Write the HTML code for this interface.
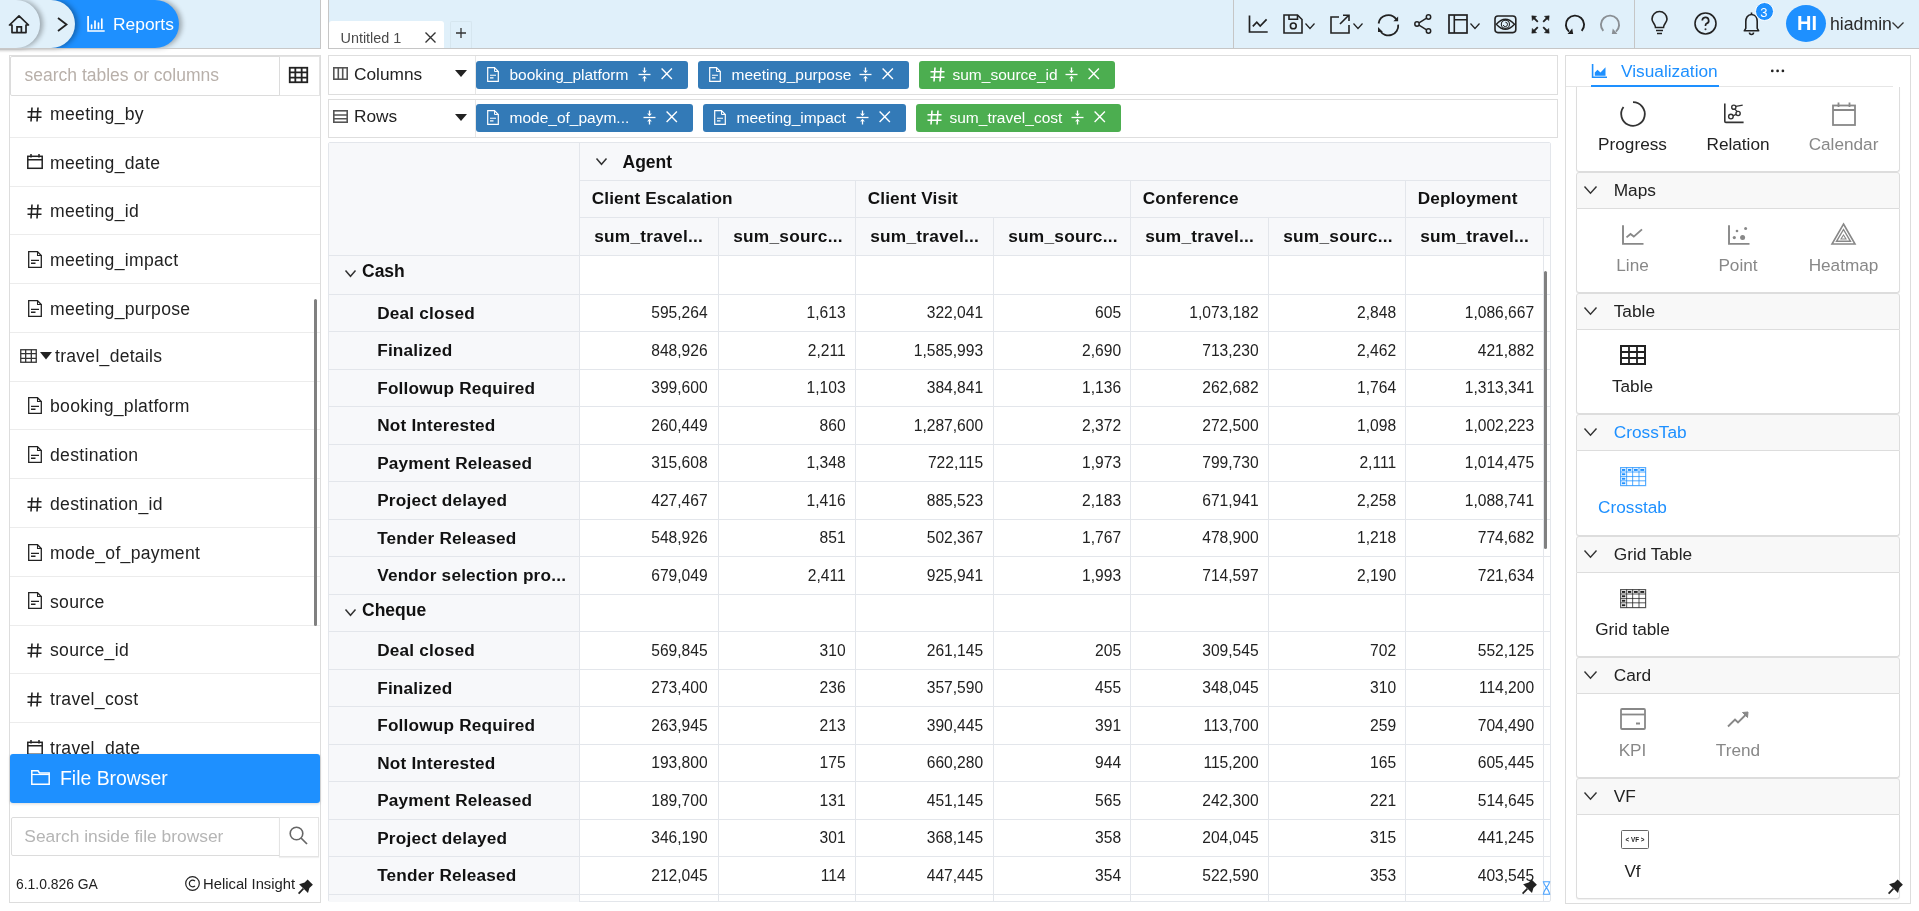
<!DOCTYPE html><html><head><meta charset="utf-8"><title>Reports</title><style>
*{box-sizing:border-box;margin:0;padding:0}
html,body{width:1919px;height:911px;overflow:hidden;background:#fff;font-family:"Liberation Sans",sans-serif;color:#222}
.a{position:absolute}
.t{position:absolute;white-space:nowrap}
svg.a{overflow:visible}
</style></head><body><div class="a" style="left:0;top:0;width:1919px;height:911px;overflow:hidden;will-change:transform"><div class="a" style="left:0px;top:0px;width:321px;height:49px;background:#e0f0fa;border-right:1px solid #c6c6c6"></div><div class="a" style="left:328px;top:0px;width:1591px;height:49px;background:#e0f0fa;border-left:1px solid #c6c6c6;border-bottom:1px solid #c6c6c6"></div><div class="a" style="left:-30px;top:0px;width:209px;height:48px;background:#1e90ff;border-radius:0 24px 24px 0;box-shadow:3px 0 5px rgba(0,0,0,.3)"></div><div class="a" style="left:-30px;top:0px;width:105px;height:48px;background:#e0f0fa;border-radius:0 24px 24px 0;box-shadow:3px 0 5px rgba(0,0,0,.3)"></div><div class="a" style="left:-30px;top:0px;width:70px;height:48px;background:#e0f0fa;border-radius:0 24px 24px 0;box-shadow:3px 0 5px rgba(0,0,0,.3)"></div><svg class="a" style="left:9px;top:15px;color:#222" width="21" height="19" viewBox="0 0 21 19" fill="none" stroke="currentColor"><path d="M0.5 10 L10 0.8 L19.5 10 H17 V17.6 H3 V10 Z" stroke-width="1.7" stroke-linejoin="round"/><path d="M8 17.6 V11.8 H12.4 V17.6" stroke-width="1.7"/></svg><svg class="a" style="left:57px;top:17px;color:#222" width="11" height="15" viewBox="0 0 11 15" fill="none" stroke="currentColor"><path d="M1 1 L9.5 7.5 L1 14" stroke-width="1.8"/></svg><svg class="a" style="left:87px;top:16px;color:#fff" width="18" height="16" viewBox="0 0 18 16" fill="none" stroke="currentColor"><path d="M1.1 0 V15 H17.7" stroke-width="1.7"/><path d="M4.6 9 V12.3 M8 5 V12.3 M11.5 7 V12.3 M14.8 3.1 V12.3" stroke-width="1.7" stroke-linecap="round"/></svg><div class="t" style="left:113px;top:15.97px;font-size:17.4px;line-height:17.4px;color:#fff;">Reports</div><div class="a" style="left:0px;top:48px;width:320px;height:1px;background:#c8c8c8"></div><div class="a" style="left:329px;top:21px;width:115px;height:27px;background:#fff;border-radius:3px 3px 0 0"></div><div class="t" style="left:340.5px;top:31.21px;font-size:14.4px;line-height:14.4px;color:#4a4a4a;">Untitled 1</div><svg class="a" style="left:425px;top:32px;color:#333" width="11" height="11" viewBox="0 0 11 11" fill="none" stroke="currentColor"><path d="M0.5 0.5 L10.5 10.5 M10.5 0.5 L0.5 10.5" stroke-width="1.4"/></svg><div class="a" style="left:450px;top:21px;width:22px;height:27px;border:1px solid #d6e6ef;border-bottom:none;border-radius:2px 2px 0 0"></div><svg class="a" style="left:456px;top:28px;color:#333" width="10" height="10" viewBox="0 0 10 10" fill="none" stroke="currentColor"><path d="M5 0 V10 M0 5 H10" stroke-width="1.3"/></svg><div class="a" style="left:1233px;top:0px;width:1px;height:48px;background:#c6c6c6"></div><div class="a" style="left:1634px;top:0px;width:1px;height:48px;background:#c6c6c6"></div><svg class="a" style="left:1248px;top:15px;color:#222" width="20" height="18" viewBox="0 0 20 18" fill="none" stroke="currentColor"><path d="M1.5 0.5 V17 H19.7" stroke-width="1.7"/><path d="M4.8 11.4 L8.8 7.2 L12.2 11 L18.6 4.3" stroke-width="1.7"/></svg><svg class="a" style="left:1283px;top:14px;color:#222" width="20" height="20" viewBox="0 0 20 20" fill="none" stroke="currentColor"><path d="M1 1 H14.5 L19 5.5 V19 H1 Z" stroke-width="1.6"/><path d="M6 1 V5.2 H14.5 V1" stroke-width="1.6"/><circle cx="10.3" cy="11.9" r="2.9" stroke-width="1.6"/></svg><svg class="a" style="left:1305px;top:23px;color:#222" width="10" height="6" viewBox="0 0 10 6" fill="none" stroke="currentColor"><path d="M0.5 0.5 L5 5.5 L9.5 0.5" stroke-width="1.2"/></svg><svg class="a" style="left:1330px;top:14px;color:#222" width="20" height="20" viewBox="0 0 20 20" fill="none" stroke="currentColor"><path d="M9 3 H1 V19 H19 V11" stroke-width="1.6"/><path d="M10 10 L18.5 1.5 M13 1.2 H19 V7" stroke-width="1.6"/></svg><svg class="a" style="left:1353px;top:23px;color:#222" width="10" height="6" viewBox="0 0 10 6" fill="none" stroke="currentColor"><path d="M0.5 0.5 L5 5.5 L9.5 0.5" stroke-width="1.2"/></svg><svg class="a" style="left:1377px;top:13px;color:#222" width="23" height="23" viewBox="0 0 23 23" fill="none" stroke="currentColor"><path d="M1.6 10.5 A9.8 9.8 0 0 1 19.3 6.3" stroke-width="1.8"/><path d="M21.2 11.6 A9.8 9.8 0 0 1 3 17.6" stroke-width="1.8"/><path d="M21.1 3.6 V8.3 H16.4 Z" fill="currentColor" stroke="none"/><path d="M1 14 V18.9 H5.9 Z" fill="currentColor" stroke="none"/></svg><svg class="a" style="left:1414px;top:14px;color:#222" width="18" height="20" viewBox="0 0 18 20" fill="none" stroke="currentColor"><circle cx="14.5" cy="3" r="2.2" stroke-width="1.5"/><circle cx="3" cy="10" r="2.2" stroke-width="1.5"/><circle cx="14.5" cy="17" r="2.2" stroke-width="1.5"/><path d="M5 8.8 L12.6 4.2 M5 11.2 L12.6 15.8" stroke-width="1.5"/></svg><svg class="a" style="left:1448px;top:14px;color:#222" width="20" height="20" viewBox="0 0 20 20" fill="none" stroke="currentColor"><rect x="1" y="1" width="18" height="18" stroke-width="1.7"/><path d="M6.3 1 V19 M6.3 5.8 H19" stroke-width="1.6"/></svg><svg class="a" style="left:1470px;top:23px;color:#222" width="10" height="6" viewBox="0 0 10 6" fill="none" stroke="currentColor"><path d="M0.5 0.5 L5 5.5 L9.5 0.5" stroke-width="1.2"/></svg><svg class="a" style="left:1494px;top:15px;color:#222" width="23" height="19" viewBox="0 0 23 19" fill="none" stroke="currentColor"><rect x="1" y="1" width="20.8" height="16.6" rx="3" stroke-width="1.6"/><path d="M2.3 9.3 Q11.4 -0.8 20.5 9.3 Q11.4 19.4 2.3 9.3 Z" stroke-width="1.4"/><circle cx="11.4" cy="9.3" r="4.1" stroke-width="1.1"/><path d="M9.2 10 A2.2 2.2 0 1 0 11.4 7.2" stroke-width="1"/></svg><svg class="a" style="left:1531px;top:15px;color:#222" width="19" height="19" viewBox="0 0 19 19" fill="none" stroke="currentColor"><path d="M2.5 2.5 L6.8 6.8 M16.5 2.5 L12.2 6.8 M2.5 16.5 L6.8 12.2 M16.5 16.5 L12.2 12.2" stroke-width="1.8"/><path d="M0.8 0.8 L5.6 1.3 L1.3 5.6 Z M18.2 0.8 L13.4 1.3 L17.7 5.6 Z M0.8 18.2 L5.6 17.7 L1.3 13.4 Z M18.2 18.2 L13.4 17.7 L17.7 13.4 Z" fill="currentColor" stroke="currentColor" stroke-width="0.5" stroke-linejoin="round"/></svg><svg class="a" style="left:1564px;top:13px;color:#1e1e1e" width="22" height="23" viewBox="0 0 22 23" fill="none" stroke="currentColor"><path d="M17.7 17.9 A9.1 9.1 0 1 0 5 18.6" stroke-width="1.9"/><path d="M3.6 21 L9.2 21 L8.2 15.6 Z" fill="currentColor" stroke="none"/></svg><svg class="a" style="left:1599px;top:13px;color:#8a8f94" width="22" height="23" viewBox="0 0 22 23" fill="none" stroke="currentColor"><path d="M4.3 17.9 A9.1 9.1 0 1 1 17 18.6" stroke-width="1.9"/><path d="M18.4 21 L12.8 21 L13.8 15.6 Z" fill="currentColor" stroke="none"/></svg><svg class="a" style="left:1651px;top:12px;color:#222" width="17" height="23" viewBox="0 0 17 23" fill="none" stroke="currentColor"><path d="M4.5 15.5 C4.5 12 1 10.5 1 7 A7.5 7.5 0 0 1 16 7 C16 10.5 12.5 12 12.5 15.5 Z" stroke-width="1.6"/><path d="M5 18.5 H12 M6 21.5 H11" stroke-width="1.6"/></svg><svg class="a" style="left:1694px;top:12px;color:#222" width="23" height="23" viewBox="0 0 23 23" fill="none" stroke="currentColor"><circle cx="11.5" cy="11.5" r="10.5" stroke-width="1.6"/><path d="M8.3 8.6 A3.2 3.2 0 1 1 12.5 11.6 C11.8 11.9 11.5 12.5 11.5 13.4 V14" stroke-width="1.7"/><circle cx="11.5" cy="17.3" r="1" fill="#333" stroke="none"/></svg><svg class="a" style="left:1742px;top:12px;color:#222" width="19" height="23" viewBox="0 0 19 23" fill="none" stroke="currentColor"><path d="M9.5 2.5 C5.5 2.5 3.8 6 3.8 9.5 V16.3 L2.3 18.8 H16.7 L15.2 16.3 V9.5 C15.2 6 13.5 2.5 9.5 2.5 Z" stroke-width="1.6" stroke-linejoin="round"/><path d="M7.5 20.5 A2 2 0 0 0 11.5 20.5" stroke-width="1.6"/><path d="M9.5 0.5 V2.5" stroke-width="1.6"/></svg><div class="a" style="left:1754.5px;top:2px;width:19px;height:19px;background:#1e90ff;border:1.5px solid #fff;border-radius:50%"></div><div class="t" style="left:1760.3px;top:6.00px;font-size:13px;line-height:13px;color:#fff;">3</div><div class="a" style="left:1786px;top:5px;width:40px;height:37px;background:#1e90ff;border-radius:50%"></div><div class="t" style="left:1797px;top:13.17px;font-size:20px;line-height:20px;font-weight:700;color:#fff;">HI</div><div class="t" style="left:1830px;top:15.72px;font-size:17.7px;line-height:17.7px;color:#2a2a2a;">hiadmin</div><svg class="a" style="left:1892px;top:22px;color:#333" width="12" height="7" viewBox="0 0 12 7" fill="none" stroke="currentColor"><path d="M0.5 0.5 L6 6 L11.5 0.5" stroke-width="1.3"/></svg><div class="a" style="left:9px;top:55px;width:312px;height:848px;border:1px solid #ddd"></div><div class="a" style="left:10px;top:56px;width:270px;height:40px;border:1px solid #dcdcdc;border-radius:2px 0 0 2px"></div><div class="a" style="left:279px;top:56px;width:41px;height:40px;border:1px solid #e4e4e4;border-left:1px solid #dcdcdc"></div><div class="t" style="left:24.5px;top:67.19px;font-size:17.5px;line-height:17.5px;color:#b8b0aa;">search tables or columns</div><svg class="a" style="left:289px;top:67px;color:#222" width="19" height="16" viewBox="0 0 19 16" fill="none" stroke="currentColor"><rect x="0.75" y="0.75" width="17.5" height="14.5" stroke-width="1.8"/><path d="M0.75 5.33 H18.25 M0.75 10.67 H18.25 M6.33 0.75 V15.25 M12.67 0.75 V15.25" stroke-width="1.8"/></svg><div class="a" style="left:10px;top:96px;width:310px;height:658px;overflow:hidden"><div class="a" style="left:0px;top:41px;width:310px;height:1px;background:#ececec"></div><svg class="a" style="left:17px;top:10.5px;color:#222" width="15" height="15" viewBox="0 0 15 15" fill="none" stroke="currentColor"><path d="M5 0.5 L4 14.5 M11 0.5 L10 14.5 M0.5 4.8 H14.5 M0.5 10.2 H14.5" stroke-width="1.6"/></svg><div class="t" style="left:40px;top:9.80px;font-size:17.6px;line-height:17.6px;color:#222;letter-spacing:0.3px">meeting_by</div><div class="a" style="left:0px;top:90px;width:310px;height:1px;background:#ececec"></div><svg class="a" style="left:17px;top:58.28px;color:#222" width="16" height="15" viewBox="0 0 16 15" fill="none" stroke="currentColor"><rect x="0.8" y="2.3" width="14.4" height="12" stroke-width="1.5"/><path d="M0.8 5.8 H15.2 M4 0 V3.5 M12 0 V3.5" stroke-width="1.5"/></svg><div class="t" style="left:40px;top:58.58px;font-size:17.6px;line-height:17.6px;color:#222;letter-spacing:0.3px">meeting_date</div><div class="a" style="left:0px;top:138px;width:310px;height:1px;background:#ececec"></div><svg class="a" style="left:17px;top:108.06px;color:#222" width="15" height="15" viewBox="0 0 15 15" fill="none" stroke="currentColor"><path d="M5 0.5 L4 14.5 M11 0.5 L10 14.5 M0.5 4.8 H14.5 M0.5 10.2 H14.5" stroke-width="1.6"/></svg><div class="t" style="left:40px;top:107.36px;font-size:17.6px;line-height:17.6px;color:#222;letter-spacing:0.3px">meeting_id</div><div class="a" style="left:0px;top:187px;width:310px;height:1px;background:#ececec"></div><svg class="a" style="left:17.5px;top:154.84000000000003px;color:#222" width="14" height="17" viewBox="0 0 14 17" fill="none" stroke="currentColor"><path d="M0.7 0.7 H9.5 L13.3 4.5 V16.3 H0.7 Z" stroke-width="1.3"/><path d="M9.5 0.7 V4.5 H13.3" stroke-width="1.04"/><path d="M3 9.35 H11 M3 12.24 H7.5" stroke-width="1.3"/></svg><div class="t" style="left:40px;top:156.14px;font-size:17.6px;line-height:17.6px;color:#222;letter-spacing:0.3px">meeting_impact</div><div class="a" style="left:0px;top:236px;width:310px;height:1px;background:#ececec"></div><svg class="a" style="left:17.5px;top:203.62px;color:#222" width="14" height="17" viewBox="0 0 14 17" fill="none" stroke="currentColor"><path d="M0.7 0.7 H9.5 L13.3 4.5 V16.3 H0.7 Z" stroke-width="1.3"/><path d="M9.5 0.7 V4.5 H13.3" stroke-width="1.04"/><path d="M3 9.35 H11 M3 12.24 H7.5" stroke-width="1.3"/></svg><div class="t" style="left:40px;top:204.92px;font-size:17.6px;line-height:17.6px;color:#222;letter-spacing:0.3px">meeting_purpose</div><div class="a" style="left:0px;top:285px;width:310px;height:1px;background:#ececec"></div><svg class="a" style="left:10px;top:252.89999999999998px;color:#333" width="17" height="14" viewBox="0 0 17 14" fill="none" stroke="currentColor"><rect x="0.75" y="0.75" width="15.5" height="12.5" stroke-width="1.3"/><path d="M0.75 4.67 H16.25 M0.75 9.33 H16.25 M5.67 0.75 V13.25 M11.33 0.75 V13.25" stroke-width="1.3"/></svg><svg class="a" style="left:29.5px;top:255.89999999999998px;" width="12" height="7.5" viewBox="0 0 12 7.5" fill="none" stroke="currentColor"><path d="M0 0 H12 L6 7.5 Z" fill="#222" stroke="none"/></svg><div class="t" style="left:45px;top:251.99px;font-size:17.5px;line-height:17.5px;color:#222;letter-spacing:0.3px">travel_details</div><div class="a" style="left:0px;top:333px;width:310px;height:1px;background:#ececec"></div><svg class="a" style="left:17.5px;top:301.18px;color:#222" width="14" height="17" viewBox="0 0 14 17" fill="none" stroke="currentColor"><path d="M0.7 0.7 H9.5 L13.3 4.5 V16.3 H0.7 Z" stroke-width="1.3"/><path d="M9.5 0.7 V4.5 H13.3" stroke-width="1.04"/><path d="M3 9.35 H11 M3 12.24 H7.5" stroke-width="1.3"/></svg><div class="t" style="left:40px;top:302.48px;font-size:17.6px;line-height:17.6px;color:#222;letter-spacing:0.3px">booking_platform</div><div class="a" style="left:0px;top:382px;width:310px;height:1px;background:#ececec"></div><svg class="a" style="left:17.5px;top:349.96000000000004px;color:#222" width="14" height="17" viewBox="0 0 14 17" fill="none" stroke="currentColor"><path d="M0.7 0.7 H9.5 L13.3 4.5 V16.3 H0.7 Z" stroke-width="1.3"/><path d="M9.5 0.7 V4.5 H13.3" stroke-width="1.04"/><path d="M3 9.35 H11 M3 12.24 H7.5" stroke-width="1.3"/></svg><div class="t" style="left:40px;top:351.26px;font-size:17.6px;line-height:17.6px;color:#222;letter-spacing:0.3px">destination</div><div class="a" style="left:0px;top:431px;width:310px;height:1px;background:#ececec"></div><svg class="a" style="left:17px;top:400.74px;color:#222" width="15" height="15" viewBox="0 0 15 15" fill="none" stroke="currentColor"><path d="M5 0.5 L4 14.5 M11 0.5 L10 14.5 M0.5 4.8 H14.5 M0.5 10.2 H14.5" stroke-width="1.6"/></svg><div class="t" style="left:40px;top:400.04px;font-size:17.6px;line-height:17.6px;color:#222;letter-spacing:0.3px">destination_id</div><div class="a" style="left:0px;top:480px;width:310px;height:1px;background:#ececec"></div><svg class="a" style="left:17.5px;top:447.52px;color:#222" width="14" height="17" viewBox="0 0 14 17" fill="none" stroke="currentColor"><path d="M0.7 0.7 H9.5 L13.3 4.5 V16.3 H0.7 Z" stroke-width="1.3"/><path d="M9.5 0.7 V4.5 H13.3" stroke-width="1.04"/><path d="M3 9.35 H11 M3 12.24 H7.5" stroke-width="1.3"/></svg><div class="t" style="left:40px;top:448.82px;font-size:17.6px;line-height:17.6px;color:#222;letter-spacing:0.3px">mode_of_payment</div><div class="a" style="left:0px;top:529px;width:310px;height:1px;background:#ececec"></div><svg class="a" style="left:17.5px;top:496.29999999999995px;color:#222" width="14" height="17" viewBox="0 0 14 17" fill="none" stroke="currentColor"><path d="M0.7 0.7 H9.5 L13.3 4.5 V16.3 H0.7 Z" stroke-width="1.3"/><path d="M9.5 0.7 V4.5 H13.3" stroke-width="1.04"/><path d="M3 9.35 H11 M3 12.24 H7.5" stroke-width="1.3"/></svg><div class="t" style="left:40px;top:497.60px;font-size:17.6px;line-height:17.6px;color:#222;letter-spacing:0.3px">source</div><div class="a" style="left:0px;top:577px;width:310px;height:1px;background:#ececec"></div><svg class="a" style="left:17px;top:547.08px;color:#222" width="15" height="15" viewBox="0 0 15 15" fill="none" stroke="currentColor"><path d="M5 0.5 L4 14.5 M11 0.5 L10 14.5 M0.5 4.8 H14.5 M0.5 10.2 H14.5" stroke-width="1.6"/></svg><div class="t" style="left:40px;top:546.38px;font-size:17.6px;line-height:17.6px;color:#222;letter-spacing:0.3px">source_id</div><div class="a" style="left:0px;top:626px;width:310px;height:1px;background:#ececec"></div><svg class="a" style="left:17px;top:595.86px;color:#222" width="15" height="15" viewBox="0 0 15 15" fill="none" stroke="currentColor"><path d="M5 0.5 L4 14.5 M11 0.5 L10 14.5 M0.5 4.8 H14.5 M0.5 10.2 H14.5" stroke-width="1.6"/></svg><div class="t" style="left:40px;top:595.16px;font-size:17.6px;line-height:17.6px;color:#222;letter-spacing:0.3px">travel_cost</div><div class="a" style="left:0px;top:675px;width:310px;height:1px;background:#ececec"></div><svg class="a" style="left:17px;top:643.64px;color:#222" width="16" height="15" viewBox="0 0 16 15" fill="none" stroke="currentColor"><rect x="0.8" y="2.3" width="14.4" height="12" stroke-width="1.5"/><path d="M0.8 5.8 H15.2 M4 0 V3.5 M12 0 V3.5" stroke-width="1.5"/></svg><div class="t" style="left:40px;top:643.94px;font-size:17.6px;line-height:17.6px;color:#222;letter-spacing:0.3px">travel_date</div><div class="a" style="left:304px;top:203px;width:3px;height:327px;background:#808080;border-radius:2px"></div></div><div class="a" style="left:10px;top:754px;width:310px;height:49px;background:#1e90ff;border-radius:3px;box-shadow:0 1px 3px rgba(0,0,0,.15)"></div><svg class="a" style="left:31px;top:770px;color:#fff" width="19" height="15" viewBox="0 0 19 15" fill="none" stroke="currentColor"><path d="M0.8 0.8 H7 L8.5 3 H18.2 V14.2 H0.8 Z" stroke-width="1.5"/><path d="M0.8 4.5 H18.2" stroke-width="1.2"/></svg><div class="t" style="left:60px;top:769.28px;font-size:19.4px;line-height:19.4px;color:#fff;">File Browser</div><div class="a" style="left:11px;top:817px;width:269px;height:39px;border:1px solid #dcdcdc;border-radius:2px 0 0 2px"></div><div class="a" style="left:279px;top:817px;width:40px;height:40px;border:1px solid #e4e4e4;box-shadow:0 1px 1px rgba(0,0,0,.06)"></div><div class="t" style="left:24.3px;top:828.27px;font-size:17.4px;line-height:17.4px;color:#b5b5b5;">Search inside file browser</div><svg class="a" style="left:289px;top:826px;color:#666" width="19" height="19" viewBox="0 0 19 19" fill="none" stroke="currentColor"><circle cx="7.5" cy="7.5" r="6.3" stroke-width="1.6"/><path d="M12 12 L18 18" stroke-width="1.7"/></svg><div class="t" style="left:16px;top:877.93px;font-size:13.9px;line-height:13.9px;color:#222;">6.1.0.826 GA</div><svg class="a" style="left:185px;top:876px;color:#222" width="15" height="15" viewBox="0 0 15 15" fill="none" stroke="currentColor"><circle cx="7.5" cy="7.5" r="6.8" stroke-width="1.2"/><path d="M10 5.2 A3.3 3.3 0 1 0 10 9.8" stroke-width="1.2"/></svg><div class="t" style="left:203px;top:877.17px;font-size:14.8px;line-height:14.8px;color:#222;">Helical Insight</div><svg class="a" style="left:298px;top:879px;color:#222" width="16" height="16" viewBox="0 0 16 16" fill="none" stroke="currentColor"><path d="M9.6 0.4 L14.9 5.7 L11.4 9 L10 13.9 L1.1 5.3 L6.6 3.6 Z" fill="currentColor" stroke="none"/><path d="M5.4 9.6 L0.6 14.7" stroke-width="1.7"/></svg><div class="a" style="left:328px;top:55px;width:1230px;height:40px;border:1px solid #dedede"></div><div class="a" style="left:475px;top:56px;width:1px;height:38px;background:#e6e6e6"></div><svg class="a" style="left:333px;top:67px;color:#555" width="15" height="13" viewBox="0 0 15 13" fill="none" stroke="currentColor"><rect x="0.8" y="0.8" width="13.4" height="11.4" stroke-width="1.6"/><path d="M5.3 0.8 V12.2 M9.7 0.8 V12.2" stroke-width="1.6"/></svg><div class="t" style="left:354px;top:66.06px;font-size:17.3px;line-height:17.3px;color:#222;">Columns</div><svg class="a" style="left:455px;top:70px;" width="12" height="7" viewBox="0 0 12 7" fill="none" stroke="currentColor"><path d="M0 0 H12 L6 7 Z" fill="#222" stroke="none"/></svg><div class="a" style="left:328px;top:99px;width:1230px;height:39px;border:1px solid #dedede"></div><div class="a" style="left:475px;top:100px;width:1px;height:37px;background:#e6e6e6"></div><svg class="a" style="left:333px;top:110px;color:#555" width="15" height="13" viewBox="0 0 15 13" fill="none" stroke="currentColor"><rect x="0.8" y="0.8" width="13.4" height="11.4" stroke-width="1.6"/><path d="M0.8 5 H14.2 M0.8 8.8 H14.2" stroke-width="1.6"/></svg><div class="t" style="left:354px;top:108.46px;font-size:17.3px;line-height:17.3px;color:#222;">Rows</div><svg class="a" style="left:455px;top:114px;" width="12" height="7" viewBox="0 0 12 7" fill="none" stroke="currentColor"><path d="M0 0 H12 L6 7 Z" fill="#222" stroke="none"/></svg><div class="a" style="left:476px;top:61px;width:212px;height:28px;background:#337ab7;border-radius:3px"></div><svg class="a" style="left:487px;top:67px;color:#fff" width="12" height="15" viewBox="0 0 12 15" fill="none" stroke="currentColor"><path d="M0.7 0.7 H7.5 L11.3 4.5 V14.3 H0.7 Z" stroke-width="1.2"/><path d="M7.5 0.7 V4.5 H11.3" stroke-width="0.96"/><path d="M3 8.25 H9 M3 10.80 H6.5" stroke-width="1.2"/></svg><div class="t" style="left:509.5px;top:66.58px;font-size:15.5px;line-height:15.5px;color:#fff;">booking_platform</div><svg class="a" style="left:638px;top:67px;color:#fff" width="13" height="15" viewBox="0 0 13 15" fill="none" stroke="currentColor"><path d="M0.5 7.5 H12.5" stroke-width="1.3"/><path d="M6.5 0.5 V5 M6.5 10 V14.5" stroke-width="1.3"/><path d="M4.7 3.5 L6.5 5.5 L8.3 3.5 M4.7 11.5 L6.5 9.5 L8.3 11.5" stroke-width="1.1"/></svg><svg class="a" style="left:660.5px;top:68px;color:#fff" width="11.5" height="11.5" viewBox="0 0 11.5 11.5" fill="none" stroke="currentColor"><path d="M0.6 0.6 L10.9 10.9 M10.9 0.6 L0.6 10.9" stroke-width="1.4"/></svg><div class="a" style="left:698px;top:61px;width:211px;height:28px;background:#337ab7;border-radius:3px"></div><svg class="a" style="left:709px;top:67px;color:#fff" width="12" height="15" viewBox="0 0 12 15" fill="none" stroke="currentColor"><path d="M0.7 0.7 H7.5 L11.3 4.5 V14.3 H0.7 Z" stroke-width="1.2"/><path d="M7.5 0.7 V4.5 H11.3" stroke-width="0.96"/><path d="M3 8.25 H9 M3 10.80 H6.5" stroke-width="1.2"/></svg><div class="t" style="left:731.5px;top:66.58px;font-size:15.5px;line-height:15.5px;color:#fff;">meeting_purpose</div><svg class="a" style="left:859px;top:67px;color:#fff" width="13" height="15" viewBox="0 0 13 15" fill="none" stroke="currentColor"><path d="M0.5 7.5 H12.5" stroke-width="1.3"/><path d="M6.5 0.5 V5 M6.5 10 V14.5" stroke-width="1.3"/><path d="M4.7 3.5 L6.5 5.5 L8.3 3.5 M4.7 11.5 L6.5 9.5 L8.3 11.5" stroke-width="1.1"/></svg><svg class="a" style="left:881.5px;top:68px;color:#fff" width="11.5" height="11.5" viewBox="0 0 11.5 11.5" fill="none" stroke="currentColor"><path d="M0.6 0.6 L10.9 10.9 M10.9 0.6 L0.6 10.9" stroke-width="1.4"/></svg><div class="a" style="left:919px;top:61px;width:196px;height:28px;background:#4cae50;border-radius:3px"></div><svg class="a" style="left:930px;top:67px;color:#fff" width="15" height="15" viewBox="0 0 15 15" fill="none" stroke="currentColor"><path d="M5 0.5 L4 14.5 M11 0.5 L10 14.5 M0.5 4.8 H14.5 M0.5 10.2 H14.5" stroke-width="1.6"/></svg><div class="t" style="left:952.5px;top:66.58px;font-size:15.5px;line-height:15.5px;color:#fff;">sum_source_id</div><svg class="a" style="left:1065px;top:67px;color:#fff" width="13" height="15" viewBox="0 0 13 15" fill="none" stroke="currentColor"><path d="M0.5 7.5 H12.5" stroke-width="1.3"/><path d="M6.5 0.5 V5 M6.5 10 V14.5" stroke-width="1.3"/><path d="M4.7 3.5 L6.5 5.5 L8.3 3.5 M4.7 11.5 L6.5 9.5 L8.3 11.5" stroke-width="1.1"/></svg><svg class="a" style="left:1087.5px;top:68px;color:#fff" width="11.5" height="11.5" viewBox="0 0 11.5 11.5" fill="none" stroke="currentColor"><path d="M0.6 0.6 L10.9 10.9 M10.9 0.6 L0.6 10.9" stroke-width="1.4"/></svg><div class="a" style="left:476px;top:104px;width:217px;height:28px;background:#337ab7;border-radius:3px"></div><svg class="a" style="left:487px;top:110px;color:#fff" width="12" height="15" viewBox="0 0 12 15" fill="none" stroke="currentColor"><path d="M0.7 0.7 H7.5 L11.3 4.5 V14.3 H0.7 Z" stroke-width="1.2"/><path d="M7.5 0.7 V4.5 H11.3" stroke-width="0.96"/><path d="M3 8.25 H9 M3 10.80 H6.5" stroke-width="1.2"/></svg><div class="t" style="left:509.5px;top:109.58px;font-size:15.5px;line-height:15.5px;color:#fff;">mode_of_paym...</div><svg class="a" style="left:643px;top:110px;color:#fff" width="13" height="15" viewBox="0 0 13 15" fill="none" stroke="currentColor"><path d="M0.5 7.5 H12.5" stroke-width="1.3"/><path d="M6.5 0.5 V5 M6.5 10 V14.5" stroke-width="1.3"/><path d="M4.7 3.5 L6.5 5.5 L8.3 3.5 M4.7 11.5 L6.5 9.5 L8.3 11.5" stroke-width="1.1"/></svg><svg class="a" style="left:665.5px;top:111px;color:#fff" width="11.5" height="11.5" viewBox="0 0 11.5 11.5" fill="none" stroke="currentColor"><path d="M0.6 0.6 L10.9 10.9 M10.9 0.6 L0.6 10.9" stroke-width="1.4"/></svg><div class="a" style="left:703px;top:104px;width:203px;height:28px;background:#337ab7;border-radius:3px"></div><svg class="a" style="left:714px;top:110px;color:#fff" width="12" height="15" viewBox="0 0 12 15" fill="none" stroke="currentColor"><path d="M0.7 0.7 H7.5 L11.3 4.5 V14.3 H0.7 Z" stroke-width="1.2"/><path d="M7.5 0.7 V4.5 H11.3" stroke-width="0.96"/><path d="M3 8.25 H9 M3 10.80 H6.5" stroke-width="1.2"/></svg><div class="t" style="left:736.5px;top:109.58px;font-size:15.5px;line-height:15.5px;color:#fff;">meeting_impact</div><svg class="a" style="left:856px;top:110px;color:#fff" width="13" height="15" viewBox="0 0 13 15" fill="none" stroke="currentColor"><path d="M0.5 7.5 H12.5" stroke-width="1.3"/><path d="M6.5 0.5 V5 M6.5 10 V14.5" stroke-width="1.3"/><path d="M4.7 3.5 L6.5 5.5 L8.3 3.5 M4.7 11.5 L6.5 9.5 L8.3 11.5" stroke-width="1.1"/></svg><svg class="a" style="left:878.5px;top:111px;color:#fff" width="11.5" height="11.5" viewBox="0 0 11.5 11.5" fill="none" stroke="currentColor"><path d="M0.6 0.6 L10.9 10.9 M10.9 0.6 L0.6 10.9" stroke-width="1.4"/></svg><div class="a" style="left:916px;top:104px;width:205px;height:28px;background:#4cae50;border-radius:3px"></div><svg class="a" style="left:927px;top:110px;color:#fff" width="15" height="15" viewBox="0 0 15 15" fill="none" stroke="currentColor"><path d="M5 0.5 L4 14.5 M11 0.5 L10 14.5 M0.5 4.8 H14.5 M0.5 10.2 H14.5" stroke-width="1.6"/></svg><div class="t" style="left:949.5px;top:109.58px;font-size:15.5px;line-height:15.5px;color:#fff;">sum_travel_cost</div><svg class="a" style="left:1071px;top:110px;color:#fff" width="13" height="15" viewBox="0 0 13 15" fill="none" stroke="currentColor"><path d="M0.5 7.5 H12.5" stroke-width="1.3"/><path d="M6.5 0.5 V5 M6.5 10 V14.5" stroke-width="1.3"/><path d="M4.7 3.5 L6.5 5.5 L8.3 3.5 M4.7 11.5 L6.5 9.5 L8.3 11.5" stroke-width="1.1"/></svg><svg class="a" style="left:1093.5px;top:111px;color:#fff" width="11.5" height="11.5" viewBox="0 0 11.5 11.5" fill="none" stroke="currentColor"><path d="M0.6 0.6 L10.9 10.9 M10.9 0.6 L0.6 10.9" stroke-width="1.4"/></svg><div class="a" style="left:328px;top:142px;width:1223px;height:760px;border:1px solid #e3e6eb;background:#fff;border-radius:2px"></div><div class="a" style="left:329px;top:143px;width:1221px;height:112.5px;background:#f7f8fa"></div><div class="a" style="left:329px;top:255.5px;width:250px;height:646px;background:#f7f8fa"></div><div class="a" style="left:579px;top:180px;width:971px;height:1px;background:#e3e6eb"></div><div class="a" style="left:579px;top:217px;width:971px;height:1px;background:#e3e6eb"></div><div class="a" style="left:329px;top:255px;width:1221px;height:1px;background:#e3e6eb"></div><div class="a" style="left:329px;top:294px;width:1221px;height:1px;background:#e3e6eb"></div><div class="a" style="left:329px;top:331px;width:1221px;height:1px;background:#e3e6eb"></div><div class="a" style="left:329px;top:369px;width:1221px;height:1px;background:#e3e6eb"></div><div class="a" style="left:329px;top:406px;width:1221px;height:1px;background:#e3e6eb"></div><div class="a" style="left:329px;top:444px;width:1221px;height:1px;background:#e3e6eb"></div><div class="a" style="left:329px;top:481px;width:1221px;height:1px;background:#e3e6eb"></div><div class="a" style="left:329px;top:519px;width:1221px;height:1px;background:#e3e6eb"></div><div class="a" style="left:329px;top:556px;width:1221px;height:1px;background:#e3e6eb"></div><div class="a" style="left:329px;top:594px;width:1221px;height:1px;background:#e3e6eb"></div><div class="a" style="left:329px;top:631px;width:1221px;height:1px;background:#e3e6eb"></div><div class="a" style="left:329px;top:669px;width:1221px;height:1px;background:#e3e6eb"></div><div class="a" style="left:329px;top:706px;width:1221px;height:1px;background:#e3e6eb"></div><div class="a" style="left:329px;top:744px;width:1221px;height:1px;background:#e3e6eb"></div><div class="a" style="left:329px;top:781px;width:1221px;height:1px;background:#e3e6eb"></div><div class="a" style="left:329px;top:819px;width:1221px;height:1px;background:#e3e6eb"></div><div class="a" style="left:329px;top:856px;width:1221px;height:1px;background:#e3e6eb"></div><div class="a" style="left:329px;top:894px;width:1221px;height:1px;background:#e3e6eb"></div><div class="a" style="left:329px;top:894px;width:1221px;height:1px;background:#e3e6eb"></div><div class="a" style="left:579px;top:142px;width:1px;height:759px;background:#e3e6eb"></div><div class="a" style="left:855px;top:180px;width:1px;height:721px;background:#e3e6eb"></div><div class="a" style="left:1130px;top:180px;width:1px;height:721px;background:#e3e6eb"></div><div class="a" style="left:1405px;top:180px;width:1px;height:721px;background:#e3e6eb"></div><div class="a" style="left:718px;top:217px;width:1px;height:684px;background:#e3e6eb"></div><div class="a" style="left:993px;top:217px;width:1px;height:684px;background:#e3e6eb"></div><div class="a" style="left:1268px;top:217px;width:1px;height:684px;background:#e3e6eb"></div><div class="a" style="left:1543px;top:217px;width:1px;height:684px;background:#e3e6eb"></div><svg class="a" style="left:596px;top:158px;color:#333" width="11" height="7" viewBox="0 0 11 7" fill="none" stroke="currentColor"><path d="M0.5 0.5 L5.5 6.3 L10.5 0.5" stroke-width="1.5"/></svg><div class="t" style="left:622.5px;top:154.09px;font-size:17.5px;line-height:17.5px;font-weight:700;color:#111;">Agent</div><div class="t" style="left:591.7px;top:189.94px;font-size:17.2px;line-height:17.2px;font-weight:700;color:#111;letter-spacing:0.15px">Client Escalation</div><div class="t" style="left:867.7px;top:189.94px;font-size:17.2px;line-height:17.2px;font-weight:700;color:#111;letter-spacing:0.15px">Client Visit</div><div class="t" style="left:1142.7px;top:189.94px;font-size:17.2px;line-height:17.2px;font-weight:700;color:#111;letter-spacing:0.15px">Conference</div><div class="t" style="left:1417.7px;top:189.94px;font-size:17.2px;line-height:17.2px;font-weight:700;color:#111;letter-spacing:0.15px">Deployment</div><div class="t" style="left:594.2px;top:227.96px;font-size:17.3px;line-height:17.3px;font-weight:700;color:#111;letter-spacing:0.25px">sum_travel...</div><div class="t" style="left:733.2px;top:227.96px;font-size:17.3px;line-height:17.3px;font-weight:700;color:#111;letter-spacing:0.25px">sum_sourc...</div><div class="t" style="left:870.2px;top:227.96px;font-size:17.3px;line-height:17.3px;font-weight:700;color:#111;letter-spacing:0.25px">sum_travel...</div><div class="t" style="left:1008.2px;top:227.96px;font-size:17.3px;line-height:17.3px;font-weight:700;color:#111;letter-spacing:0.25px">sum_sourc...</div><div class="t" style="left:1145.2px;top:227.96px;font-size:17.3px;line-height:17.3px;font-weight:700;color:#111;letter-spacing:0.25px">sum_travel...</div><div class="t" style="left:1283.2px;top:227.96px;font-size:17.3px;line-height:17.3px;font-weight:700;color:#111;letter-spacing:0.25px">sum_sourc...</div><div class="t" style="left:1420.2px;top:227.96px;font-size:17.3px;line-height:17.3px;font-weight:700;color:#111;letter-spacing:0.25px">sum_travel...</div><svg class="a" style="left:345px;top:269.7px;color:#333" width="11" height="7" viewBox="0 0 11 7" fill="none" stroke="currentColor"><path d="M0.5 0.5 L5.5 6.3 L10.5 0.5" stroke-width="1.5"/></svg><div class="t" style="left:362px;top:262.89px;font-size:17.5px;line-height:17.5px;font-weight:700;color:#111;">Cash</div><div class="t" style="left:377.2px;top:304.94px;font-size:17.2px;line-height:17.2px;font-weight:700;color:#111;letter-spacing:0.2px">Deal closed</div><div class="t" style="left:579px;top:305.29px;font-size:15.6px;line-height:15.6px;color:#222;width:128.6px;text-align:right;">595,264</div><div class="t" style="left:718px;top:305.29px;font-size:15.6px;line-height:15.6px;color:#222;width:127.6px;text-align:right;">1,613</div><div class="t" style="left:855px;top:305.29px;font-size:15.6px;line-height:15.6px;color:#222;width:128.1px;text-align:right;">322,041</div><div class="t" style="left:993px;top:305.29px;font-size:15.6px;line-height:15.6px;color:#222;width:128.1px;text-align:right;">605</div><div class="t" style="left:1130px;top:305.29px;font-size:15.6px;line-height:15.6px;color:#222;width:128.6px;text-align:right;">1,073,182</div><div class="t" style="left:1268px;top:305.29px;font-size:15.6px;line-height:15.6px;color:#222;width:128.1px;text-align:right;">2,848</div><div class="t" style="left:1405px;top:305.29px;font-size:15.6px;line-height:15.6px;color:#222;width:129.1px;text-align:right;">1,086,667</div><div class="t" style="left:377.2px;top:342.44px;font-size:17.2px;line-height:17.2px;font-weight:700;color:#111;letter-spacing:0.2px">Finalized</div><div class="t" style="left:579px;top:342.79px;font-size:15.6px;line-height:15.6px;color:#222;width:128.6px;text-align:right;">848,926</div><div class="t" style="left:718px;top:342.79px;font-size:15.6px;line-height:15.6px;color:#222;width:127.6px;text-align:right;">2,211</div><div class="t" style="left:855px;top:342.79px;font-size:15.6px;line-height:15.6px;color:#222;width:128.1px;text-align:right;">1,585,993</div><div class="t" style="left:993px;top:342.79px;font-size:15.6px;line-height:15.6px;color:#222;width:128.1px;text-align:right;">2,690</div><div class="t" style="left:1130px;top:342.79px;font-size:15.6px;line-height:15.6px;color:#222;width:128.6px;text-align:right;">713,230</div><div class="t" style="left:1268px;top:342.79px;font-size:15.6px;line-height:15.6px;color:#222;width:128.1px;text-align:right;">2,462</div><div class="t" style="left:1405px;top:342.79px;font-size:15.6px;line-height:15.6px;color:#222;width:129.1px;text-align:right;">421,882</div><div class="t" style="left:377.2px;top:379.94px;font-size:17.2px;line-height:17.2px;font-weight:700;color:#111;letter-spacing:0.2px">Followup Required</div><div class="t" style="left:579px;top:380.29px;font-size:15.6px;line-height:15.6px;color:#222;width:128.6px;text-align:right;">399,600</div><div class="t" style="left:718px;top:380.29px;font-size:15.6px;line-height:15.6px;color:#222;width:127.6px;text-align:right;">1,103</div><div class="t" style="left:855px;top:380.29px;font-size:15.6px;line-height:15.6px;color:#222;width:128.1px;text-align:right;">384,841</div><div class="t" style="left:993px;top:380.29px;font-size:15.6px;line-height:15.6px;color:#222;width:128.1px;text-align:right;">1,136</div><div class="t" style="left:1130px;top:380.29px;font-size:15.6px;line-height:15.6px;color:#222;width:128.6px;text-align:right;">262,682</div><div class="t" style="left:1268px;top:380.29px;font-size:15.6px;line-height:15.6px;color:#222;width:128.1px;text-align:right;">1,764</div><div class="t" style="left:1405px;top:380.29px;font-size:15.6px;line-height:15.6px;color:#222;width:129.1px;text-align:right;">1,313,341</div><div class="t" style="left:377.2px;top:417.44px;font-size:17.2px;line-height:17.2px;font-weight:700;color:#111;letter-spacing:0.2px">Not Interested</div><div class="t" style="left:579px;top:417.79px;font-size:15.6px;line-height:15.6px;color:#222;width:128.6px;text-align:right;">260,449</div><div class="t" style="left:718px;top:417.79px;font-size:15.6px;line-height:15.6px;color:#222;width:127.6px;text-align:right;">860</div><div class="t" style="left:855px;top:417.79px;font-size:15.6px;line-height:15.6px;color:#222;width:128.1px;text-align:right;">1,287,600</div><div class="t" style="left:993px;top:417.79px;font-size:15.6px;line-height:15.6px;color:#222;width:128.1px;text-align:right;">2,372</div><div class="t" style="left:1130px;top:417.79px;font-size:15.6px;line-height:15.6px;color:#222;width:128.6px;text-align:right;">272,500</div><div class="t" style="left:1268px;top:417.79px;font-size:15.6px;line-height:15.6px;color:#222;width:128.1px;text-align:right;">1,098</div><div class="t" style="left:1405px;top:417.79px;font-size:15.6px;line-height:15.6px;color:#222;width:129.1px;text-align:right;">1,002,223</div><div class="t" style="left:377.2px;top:454.94px;font-size:17.2px;line-height:17.2px;font-weight:700;color:#111;letter-spacing:0.2px">Payment Released</div><div class="t" style="left:579px;top:455.29px;font-size:15.6px;line-height:15.6px;color:#222;width:128.6px;text-align:right;">315,608</div><div class="t" style="left:718px;top:455.29px;font-size:15.6px;line-height:15.6px;color:#222;width:127.6px;text-align:right;">1,348</div><div class="t" style="left:855px;top:455.29px;font-size:15.6px;line-height:15.6px;color:#222;width:128.1px;text-align:right;">722,115</div><div class="t" style="left:993px;top:455.29px;font-size:15.6px;line-height:15.6px;color:#222;width:128.1px;text-align:right;">1,973</div><div class="t" style="left:1130px;top:455.29px;font-size:15.6px;line-height:15.6px;color:#222;width:128.6px;text-align:right;">799,730</div><div class="t" style="left:1268px;top:455.29px;font-size:15.6px;line-height:15.6px;color:#222;width:128.1px;text-align:right;">2,111</div><div class="t" style="left:1405px;top:455.29px;font-size:15.6px;line-height:15.6px;color:#222;width:129.1px;text-align:right;">1,014,475</div><div class="t" style="left:377.2px;top:492.44px;font-size:17.2px;line-height:17.2px;font-weight:700;color:#111;letter-spacing:0.2px">Project delayed</div><div class="t" style="left:579px;top:492.79px;font-size:15.6px;line-height:15.6px;color:#222;width:128.6px;text-align:right;">427,467</div><div class="t" style="left:718px;top:492.79px;font-size:15.6px;line-height:15.6px;color:#222;width:127.6px;text-align:right;">1,416</div><div class="t" style="left:855px;top:492.79px;font-size:15.6px;line-height:15.6px;color:#222;width:128.1px;text-align:right;">885,523</div><div class="t" style="left:993px;top:492.79px;font-size:15.6px;line-height:15.6px;color:#222;width:128.1px;text-align:right;">2,183</div><div class="t" style="left:1130px;top:492.79px;font-size:15.6px;line-height:15.6px;color:#222;width:128.6px;text-align:right;">671,941</div><div class="t" style="left:1268px;top:492.79px;font-size:15.6px;line-height:15.6px;color:#222;width:128.1px;text-align:right;">2,258</div><div class="t" style="left:1405px;top:492.79px;font-size:15.6px;line-height:15.6px;color:#222;width:129.1px;text-align:right;">1,088,741</div><div class="t" style="left:377.2px;top:529.94px;font-size:17.2px;line-height:17.2px;font-weight:700;color:#111;letter-spacing:0.2px">Tender Released</div><div class="t" style="left:579px;top:530.29px;font-size:15.6px;line-height:15.6px;color:#222;width:128.6px;text-align:right;">548,926</div><div class="t" style="left:718px;top:530.29px;font-size:15.6px;line-height:15.6px;color:#222;width:127.6px;text-align:right;">851</div><div class="t" style="left:855px;top:530.29px;font-size:15.6px;line-height:15.6px;color:#222;width:128.1px;text-align:right;">502,367</div><div class="t" style="left:993px;top:530.29px;font-size:15.6px;line-height:15.6px;color:#222;width:128.1px;text-align:right;">1,767</div><div class="t" style="left:1130px;top:530.29px;font-size:15.6px;line-height:15.6px;color:#222;width:128.6px;text-align:right;">478,900</div><div class="t" style="left:1268px;top:530.29px;font-size:15.6px;line-height:15.6px;color:#222;width:128.1px;text-align:right;">1,218</div><div class="t" style="left:1405px;top:530.29px;font-size:15.6px;line-height:15.6px;color:#222;width:129.1px;text-align:right;">774,682</div><div class="t" style="left:377.2px;top:567.44px;font-size:17.2px;line-height:17.2px;font-weight:700;color:#111;letter-spacing:0.2px">Vendor selection pro...</div><div class="t" style="left:579px;top:567.79px;font-size:15.6px;line-height:15.6px;color:#222;width:128.6px;text-align:right;">679,049</div><div class="t" style="left:718px;top:567.79px;font-size:15.6px;line-height:15.6px;color:#222;width:127.6px;text-align:right;">2,411</div><div class="t" style="left:855px;top:567.79px;font-size:15.6px;line-height:15.6px;color:#222;width:128.1px;text-align:right;">925,941</div><div class="t" style="left:993px;top:567.79px;font-size:15.6px;line-height:15.6px;color:#222;width:128.1px;text-align:right;">1,993</div><div class="t" style="left:1130px;top:567.79px;font-size:15.6px;line-height:15.6px;color:#222;width:128.6px;text-align:right;">714,597</div><div class="t" style="left:1268px;top:567.79px;font-size:15.6px;line-height:15.6px;color:#222;width:128.1px;text-align:right;">2,190</div><div class="t" style="left:1405px;top:567.79px;font-size:15.6px;line-height:15.6px;color:#222;width:129.1px;text-align:right;">721,634</div><svg class="a" style="left:345px;top:608.6px;color:#333" width="11" height="7" viewBox="0 0 11 7" fill="none" stroke="currentColor"><path d="M0.5 0.5 L5.5 6.3 L10.5 0.5" stroke-width="1.5"/></svg><div class="t" style="left:362px;top:601.79px;font-size:17.5px;line-height:17.5px;font-weight:700;color:#111;">Cheque</div><div class="t" style="left:377.2px;top:642.44px;font-size:17.2px;line-height:17.2px;font-weight:700;color:#111;letter-spacing:0.2px">Deal closed</div><div class="t" style="left:579px;top:642.79px;font-size:15.6px;line-height:15.6px;color:#222;width:128.6px;text-align:right;">569,845</div><div class="t" style="left:718px;top:642.79px;font-size:15.6px;line-height:15.6px;color:#222;width:127.6px;text-align:right;">310</div><div class="t" style="left:855px;top:642.79px;font-size:15.6px;line-height:15.6px;color:#222;width:128.1px;text-align:right;">261,145</div><div class="t" style="left:993px;top:642.79px;font-size:15.6px;line-height:15.6px;color:#222;width:128.1px;text-align:right;">205</div><div class="t" style="left:1130px;top:642.79px;font-size:15.6px;line-height:15.6px;color:#222;width:128.6px;text-align:right;">309,545</div><div class="t" style="left:1268px;top:642.79px;font-size:15.6px;line-height:15.6px;color:#222;width:128.1px;text-align:right;">702</div><div class="t" style="left:1405px;top:642.79px;font-size:15.6px;line-height:15.6px;color:#222;width:129.1px;text-align:right;">552,125</div><div class="t" style="left:377.2px;top:679.94px;font-size:17.2px;line-height:17.2px;font-weight:700;color:#111;letter-spacing:0.2px">Finalized</div><div class="t" style="left:579px;top:680.29px;font-size:15.6px;line-height:15.6px;color:#222;width:128.6px;text-align:right;">273,400</div><div class="t" style="left:718px;top:680.29px;font-size:15.6px;line-height:15.6px;color:#222;width:127.6px;text-align:right;">236</div><div class="t" style="left:855px;top:680.29px;font-size:15.6px;line-height:15.6px;color:#222;width:128.1px;text-align:right;">357,590</div><div class="t" style="left:993px;top:680.29px;font-size:15.6px;line-height:15.6px;color:#222;width:128.1px;text-align:right;">455</div><div class="t" style="left:1130px;top:680.29px;font-size:15.6px;line-height:15.6px;color:#222;width:128.6px;text-align:right;">348,045</div><div class="t" style="left:1268px;top:680.29px;font-size:15.6px;line-height:15.6px;color:#222;width:128.1px;text-align:right;">310</div><div class="t" style="left:1405px;top:680.29px;font-size:15.6px;line-height:15.6px;color:#222;width:129.1px;text-align:right;">114,200</div><div class="t" style="left:377.2px;top:717.44px;font-size:17.2px;line-height:17.2px;font-weight:700;color:#111;letter-spacing:0.2px">Followup Required</div><div class="t" style="left:579px;top:717.79px;font-size:15.6px;line-height:15.6px;color:#222;width:128.6px;text-align:right;">263,945</div><div class="t" style="left:718px;top:717.79px;font-size:15.6px;line-height:15.6px;color:#222;width:127.6px;text-align:right;">213</div><div class="t" style="left:855px;top:717.79px;font-size:15.6px;line-height:15.6px;color:#222;width:128.1px;text-align:right;">390,445</div><div class="t" style="left:993px;top:717.79px;font-size:15.6px;line-height:15.6px;color:#222;width:128.1px;text-align:right;">391</div><div class="t" style="left:1130px;top:717.79px;font-size:15.6px;line-height:15.6px;color:#222;width:128.6px;text-align:right;">113,700</div><div class="t" style="left:1268px;top:717.79px;font-size:15.6px;line-height:15.6px;color:#222;width:128.1px;text-align:right;">259</div><div class="t" style="left:1405px;top:717.79px;font-size:15.6px;line-height:15.6px;color:#222;width:129.1px;text-align:right;">704,490</div><div class="t" style="left:377.2px;top:754.94px;font-size:17.2px;line-height:17.2px;font-weight:700;color:#111;letter-spacing:0.2px">Not Interested</div><div class="t" style="left:579px;top:755.29px;font-size:15.6px;line-height:15.6px;color:#222;width:128.6px;text-align:right;">193,800</div><div class="t" style="left:718px;top:755.29px;font-size:15.6px;line-height:15.6px;color:#222;width:127.6px;text-align:right;">175</div><div class="t" style="left:855px;top:755.29px;font-size:15.6px;line-height:15.6px;color:#222;width:128.1px;text-align:right;">660,280</div><div class="t" style="left:993px;top:755.29px;font-size:15.6px;line-height:15.6px;color:#222;width:128.1px;text-align:right;">944</div><div class="t" style="left:1130px;top:755.29px;font-size:15.6px;line-height:15.6px;color:#222;width:128.6px;text-align:right;">115,200</div><div class="t" style="left:1268px;top:755.29px;font-size:15.6px;line-height:15.6px;color:#222;width:128.1px;text-align:right;">165</div><div class="t" style="left:1405px;top:755.29px;font-size:15.6px;line-height:15.6px;color:#222;width:129.1px;text-align:right;">605,445</div><div class="t" style="left:377.2px;top:792.44px;font-size:17.2px;line-height:17.2px;font-weight:700;color:#111;letter-spacing:0.2px">Payment Released</div><div class="t" style="left:579px;top:792.79px;font-size:15.6px;line-height:15.6px;color:#222;width:128.6px;text-align:right;">189,700</div><div class="t" style="left:718px;top:792.79px;font-size:15.6px;line-height:15.6px;color:#222;width:127.6px;text-align:right;">131</div><div class="t" style="left:855px;top:792.79px;font-size:15.6px;line-height:15.6px;color:#222;width:128.1px;text-align:right;">451,145</div><div class="t" style="left:993px;top:792.79px;font-size:15.6px;line-height:15.6px;color:#222;width:128.1px;text-align:right;">565</div><div class="t" style="left:1130px;top:792.79px;font-size:15.6px;line-height:15.6px;color:#222;width:128.6px;text-align:right;">242,300</div><div class="t" style="left:1268px;top:792.79px;font-size:15.6px;line-height:15.6px;color:#222;width:128.1px;text-align:right;">221</div><div class="t" style="left:1405px;top:792.79px;font-size:15.6px;line-height:15.6px;color:#222;width:129.1px;text-align:right;">514,645</div><div class="t" style="left:377.2px;top:829.94px;font-size:17.2px;line-height:17.2px;font-weight:700;color:#111;letter-spacing:0.2px">Project delayed</div><div class="t" style="left:579px;top:830.29px;font-size:15.6px;line-height:15.6px;color:#222;width:128.6px;text-align:right;">346,190</div><div class="t" style="left:718px;top:830.29px;font-size:15.6px;line-height:15.6px;color:#222;width:127.6px;text-align:right;">301</div><div class="t" style="left:855px;top:830.29px;font-size:15.6px;line-height:15.6px;color:#222;width:128.1px;text-align:right;">368,145</div><div class="t" style="left:993px;top:830.29px;font-size:15.6px;line-height:15.6px;color:#222;width:128.1px;text-align:right;">358</div><div class="t" style="left:1130px;top:830.29px;font-size:15.6px;line-height:15.6px;color:#222;width:128.6px;text-align:right;">204,045</div><div class="t" style="left:1268px;top:830.29px;font-size:15.6px;line-height:15.6px;color:#222;width:128.1px;text-align:right;">315</div><div class="t" style="left:1405px;top:830.29px;font-size:15.6px;line-height:15.6px;color:#222;width:129.1px;text-align:right;">441,245</div><div class="t" style="left:377.2px;top:867.44px;font-size:17.2px;line-height:17.2px;font-weight:700;color:#111;letter-spacing:0.2px">Tender Released</div><div class="t" style="left:579px;top:867.79px;font-size:15.6px;line-height:15.6px;color:#222;width:128.6px;text-align:right;">212,045</div><div class="t" style="left:718px;top:867.79px;font-size:15.6px;line-height:15.6px;color:#222;width:127.6px;text-align:right;">114</div><div class="t" style="left:855px;top:867.79px;font-size:15.6px;line-height:15.6px;color:#222;width:128.1px;text-align:right;">447,445</div><div class="t" style="left:993px;top:867.79px;font-size:15.6px;line-height:15.6px;color:#222;width:128.1px;text-align:right;">354</div><div class="t" style="left:1130px;top:867.79px;font-size:15.6px;line-height:15.6px;color:#222;width:128.6px;text-align:right;">522,590</div><div class="t" style="left:1268px;top:867.79px;font-size:15.6px;line-height:15.6px;color:#222;width:128.1px;text-align:right;">353</div><div class="t" style="left:1405px;top:867.79px;font-size:15.6px;line-height:15.6px;color:#222;width:129.1px;text-align:right;">403,545</div><div class="a" style="left:1544px;top:271px;width:3px;height:278px;background:#808080;border-radius:2px"></div><svg class="a" style="left:1522px;top:879px;color:#222" width="16" height="16" viewBox="0 0 16 16" fill="none" stroke="currentColor"><path d="M9.6 0.4 L14.9 5.7 L11.4 9 L10 13.9 L1.1 5.3 L6.6 3.6 Z" fill="currentColor" stroke="none"/><path d="M5.4 9.6 L0.6 14.7" stroke-width="1.7"/></svg><svg class="a" style="left:1542px;top:881px;color:#4aa3ff" width="9" height="14" viewBox="0 0 9 14" fill="none" stroke="currentColor"><path d="M0.8 0.8 H8.2 M0.8 13.2 H8.2 M1.5 0.8 C1.5 5 7.5 8 7.5 13.2 M7.5 0.8 C7.5 5 1.5 8 1.5 13.2" stroke-width="1.1"/></svg><div class="a" style="left:1565px;top:55px;width:346px;height:849px;border:1px solid #ddd"></div><svg class="a" style="left:1591px;top:64px;color:#1e90ff" width="17" height="15" viewBox="0 0 17 15" fill="none" stroke="currentColor"><path d="M1.6 0 V13.3 H16" stroke-width="1.6"/><path d="M3.8 11.7 V8.5 L6.5 5.8 L9.5 8.5 L14.5 3.2 V11.7 Z" fill="currentColor" stroke="none"/></svg><div class="t" style="left:1621px;top:63.06px;font-size:17.3px;line-height:17.3px;color:#1e90ff;">Visualization</div><svg class="a" style="left:1770px;top:69px;" width="16" height="4" viewBox="0 0 16 4" fill="none" stroke="currentColor"><circle cx="2.3" cy="1.9" r="1.35" fill="#222" stroke="none"/><circle cx="7.6" cy="1.9" r="1.35" fill="#222" stroke="none"/><circle cx="12.9" cy="1.9" r="1.35" fill="#222" stroke="none"/></svg><div class="a" style="left:1566px;top:86px;width:327px;height:1px;background:#e6e6e6"></div><div class="a" style="left:1591px;top:85px;width:128px;height:2px;background:#1e90ff"></div><div class="a" style="left:1576px;top:87px;width:324px;height:85px;border:1px solid #ddd;border-top:none;border-radius:0 0 3px 3px;box-shadow:0 1px 1px rgba(0,0,0,.05)"></div><svg class="a" style="left:1619.5px;top:100.5px;color:#333" width="26" height="26" viewBox="0 0 26 26" fill="none" stroke="currentColor"><path d="M13 1.2 A11.8 11.8 0 1 1 3.5 6" stroke-width="1.8"/></svg><svg class="a" style="left:1724px;top:103.0px;color:#333" width="21" height="21" viewBox="0 0 21 21" fill="none" stroke="currentColor"><path d="M0.8 0.4 V18.3 Q0.8 19.4 1.9 19.4 H19.6" stroke-width="1.6"/><circle cx="9.8" cy="4.2" r="2.1" stroke-width="1.4"/><circle cx="14.1" cy="10.5" r="2.1" stroke-width="1.4"/><circle cx="6.9" cy="13.6" r="2.3" stroke-width="1.4"/><path d="M11.9 3.3 L18.7 2.1 M10.8 6.1 L13.2 8.5 M12.1 11.4 L9 12.8" stroke-width="1.3"/></svg><svg class="a" style="left:1831.5px;top:101.5px;color:#888" width="24" height="24" viewBox="0 0 24 24" fill="none" stroke="currentColor"><rect x="1" y="3.5" width="22" height="19.5" stroke-width="1.8"/><path d="M1 8 H23 M6.5 0.5 V5 M17.5 0.5 V5" stroke-width="1.8"/></svg><div class="t" style="left:1572.5px;top:136.14px;font-size:17.2px;line-height:17.2px;color:#222;width:120px;text-align:center;">Progress</div><div class="t" style="left:1678px;top:136.14px;font-size:17.2px;line-height:17.2px;color:#222;width:120px;text-align:center;">Relation</div><div class="t" style="left:1783.5px;top:136.14px;font-size:17.2px;line-height:17.2px;color:#888;width:120px;text-align:center;">Calendar</div><div class="a" style="left:1576px;top:172px;width:324px;height:37px;background:#f8f8f8;border:1px solid #ddd;border-radius:3px 3px 0 0"></div><div class="a" style="left:1576px;top:209px;width:324px;height:84px;background:#fff;border:1px solid #ddd;border-top:none;border-radius:0 0 3px 3px;box-shadow:0 1px 1px rgba(0,0,0,.06)"></div><svg class="a" style="left:1583.5px;top:186px;color:#333" width="13" height="8" viewBox="0 0 13 8" fill="none" stroke="currentColor"><path d="M0.5 0.5 L6.5 7.3 L12.5 0.5" stroke-width="1.4"/></svg><div class="t" style="left:1613.7px;top:181.76px;font-size:17.3px;line-height:17.3px;color:#222;">Maps</div><svg class="a" style="left:1622.0px;top:224.5px;color:#888" width="22" height="20" viewBox="0 0 22 20" fill="none" stroke="currentColor"><path d="M1 0.3 V18.9 H21.5" stroke-width="1.9"/><path d="M4.5 12.4 L8.5 9 L11.8 11.6 L20 4.4" stroke-width="1.9"/></svg><div class="t" style="left:1572.5px;top:256.64px;font-size:17.2px;line-height:17.2px;color:#888;width:120px;text-align:center;">Line</div><svg class="a" style="left:1727.5px;top:224.5px;color:#888" width="22" height="20" viewBox="0 0 22 20" fill="none" stroke="currentColor"><path d="M1 0.3 V18.9 H21.5" stroke-width="1.9"/><circle cx="6.3" cy="12.6" r="1.6" fill="currentColor" stroke="none"/><circle cx="9" cy="6" r="1.3" fill="currentColor" stroke="none"/><circle cx="14.6" cy="12.6" r="2.5" fill="currentColor" stroke="none"/><circle cx="17.6" cy="3.4" r="1.5" fill="currentColor" stroke="none"/></svg><div class="t" style="left:1678px;top:256.64px;font-size:17.2px;line-height:17.2px;color:#888;width:120px;text-align:center;">Point</div><svg class="a" style="left:1831.0px;top:223px;color:#888" width="25" height="22" viewBox="0 0 25 22" fill="none" stroke="currentColor"><path d="M12.5 1 L24 21 H1 Z" stroke-width="1.6"/><path d="M12.5 6.5 L19.5 18.3 H5.5 Z" stroke-width="1.4"/><path d="M12.5 12 L15 16 H10 Z" stroke-width="1.1"/></svg><div class="t" style="left:1783.5px;top:256.64px;font-size:17.2px;line-height:17.2px;color:#888;width:120px;text-align:center;">Heatmap</div><div class="a" style="left:1576px;top:293px;width:324px;height:37px;background:#f8f8f8;border:1px solid #ddd;border-radius:3px 3px 0 0"></div><div class="a" style="left:1576px;top:330px;width:324px;height:84px;background:#fff;border:1px solid #ddd;border-top:none;border-radius:0 0 3px 3px;box-shadow:0 1px 1px rgba(0,0,0,.06)"></div><svg class="a" style="left:1583.5px;top:307px;color:#333" width="13" height="8" viewBox="0 0 13 8" fill="none" stroke="currentColor"><path d="M0.5 0.5 L6.5 7.3 L12.5 0.5" stroke-width="1.4"/></svg><div class="t" style="left:1613.7px;top:302.76px;font-size:17.3px;line-height:17.3px;color:#222;">Table</div><svg class="a" style="left:1619.5px;top:345px;color:#222" width="26" height="20" viewBox="0 0 26 20" fill="none" stroke="currentColor"><rect x="1" y="1" width="24" height="18" stroke-width="2"/><path d="M1 7 H25 M1 13 H25 M9 1 V19 M17 1 V19" stroke-width="1.8"/></svg><div class="t" style="left:1572.5px;top:377.64px;font-size:17.2px;line-height:17.2px;color:#222;width:120px;text-align:center;">Table</div><div class="a" style="left:1576px;top:414px;width:324px;height:37px;background:#f8f8f8;border:1px solid #ddd;border-radius:3px 3px 0 0"></div><div class="a" style="left:1576px;top:451px;width:324px;height:85px;background:#fff;border:1px solid #ddd;border-top:none;border-radius:0 0 3px 3px;box-shadow:0 1px 1px rgba(0,0,0,.06)"></div><svg class="a" style="left:1583.5px;top:428px;color:#333" width="13" height="8" viewBox="0 0 13 8" fill="none" stroke="currentColor"><path d="M0.5 0.5 L6.5 7.3 L12.5 0.5" stroke-width="1.4"/></svg><div class="t" style="left:1613.7px;top:423.76px;font-size:17.3px;line-height:17.3px;color:#1e90ff;">CrossTab</div><svg class="a" style="left:1619.5px;top:466.5px;color:#1e90ff" width="26" height="19" viewBox="0 0 26 19" fill="none" stroke="currentColor"><rect x="0.6" y="0.6" width="25" height="18" stroke-width="1.2" opacity="0.75"/><path d="M6.6 0.6 V18.6" stroke-width="1.1" opacity="0.7"/><path d="M12.6 0.6 V18.6" stroke-width="1.1" opacity="0.7"/><path d="M19 0.6 V18.6" stroke-width="1.1" opacity="0.7"/><path d="M0.6 5 H25.6" stroke-width="1.1" opacity="0.7"/><path d="M0.6 9.5 H25.6" stroke-width="1.1" opacity="0.7"/><path d="M0.6 13.8 H25.6" stroke-width="1.1" opacity="0.7"/><rect x="1.9" y="2" width="3.4" height="1.9" fill="currentColor" stroke="none"/><rect x="7.9" y="2" width="3.4" height="1.9" fill="currentColor" stroke="none"/><rect x="13.9" y="2" width="3.8" height="1.9" fill="currentColor" stroke="none"/><rect x="20.3" y="2" width="4.0" height="1.9" fill="currentColor" stroke="none"/><rect x="1.9" y="6.3" width="3.4" height="1.9" fill="currentColor" stroke="none"/><rect x="1.9" y="10.8" width="3.4" height="1.9" fill="currentColor" stroke="none"/><rect x="1.9" y="15.3" width="3.4" height="1.9" fill="currentColor" stroke="none"/></svg><div class="t" style="left:1572.5px;top:498.64px;font-size:17.2px;line-height:17.2px;color:#1e90ff;width:120px;text-align:center;">Crosstab</div><div class="a" style="left:1576px;top:536px;width:324px;height:37px;background:#f8f8f8;border:1px solid #ddd;border-radius:3px 3px 0 0"></div><div class="a" style="left:1576px;top:573px;width:324px;height:84px;background:#fff;border:1px solid #ddd;border-top:none;border-radius:0 0 3px 3px;box-shadow:0 1px 1px rgba(0,0,0,.06)"></div><svg class="a" style="left:1583.5px;top:550px;color:#333" width="13" height="8" viewBox="0 0 13 8" fill="none" stroke="currentColor"><path d="M0.5 0.5 L6.5 7.3 L12.5 0.5" stroke-width="1.4"/></svg><div class="t" style="left:1613.7px;top:545.76px;font-size:17.3px;line-height:17.3px;color:#222;">Grid Table</div><svg class="a" style="left:1619.5px;top:588.5px;color:#222" width="26" height="19" viewBox="0 0 26 19" fill="none" stroke="currentColor"><rect x="0.6" y="0.6" width="25" height="18" stroke-width="1.2" opacity="0.75"/><path d="M6.6 0.6 V18.6" stroke-width="1.1" opacity="0.7"/><path d="M12.6 0.6 V18.6" stroke-width="1.1" opacity="0.7"/><path d="M19 0.6 V18.6" stroke-width="1.1" opacity="0.7"/><path d="M0.6 5 H25.6" stroke-width="1.1" opacity="0.7"/><path d="M0.6 9.5 H25.6" stroke-width="1.1" opacity="0.7"/><path d="M0.6 13.8 H25.6" stroke-width="1.1" opacity="0.7"/><rect x="1.9" y="2" width="3.4" height="1.9" fill="currentColor" stroke="none"/><rect x="7.9" y="2" width="3.4" height="1.9" fill="currentColor" stroke="none"/><rect x="13.9" y="2" width="3.8" height="1.9" fill="currentColor" stroke="none"/><rect x="20.3" y="2" width="4.0" height="1.9" fill="currentColor" stroke="none"/><rect x="1.9" y="6.3" width="3.4" height="1.9" fill="currentColor" stroke="none"/><rect x="1.9" y="10.8" width="3.4" height="1.9" fill="currentColor" stroke="none"/><rect x="1.9" y="15.3" width="3.4" height="1.9" fill="currentColor" stroke="none"/></svg><div class="t" style="left:1572.5px;top:620.64px;font-size:17.2px;line-height:17.2px;color:#222;width:120px;text-align:center;">Grid table</div><div class="a" style="left:1576px;top:657px;width:324px;height:37px;background:#f8f8f8;border:1px solid #ddd;border-radius:3px 3px 0 0"></div><div class="a" style="left:1576px;top:694px;width:324px;height:84px;background:#fff;border:1px solid #ddd;border-top:none;border-radius:0 0 3px 3px;box-shadow:0 1px 1px rgba(0,0,0,.06)"></div><svg class="a" style="left:1583.5px;top:671px;color:#333" width="13" height="8" viewBox="0 0 13 8" fill="none" stroke="currentColor"><path d="M0.5 0.5 L6.5 7.3 L12.5 0.5" stroke-width="1.4"/></svg><div class="t" style="left:1613.7px;top:666.76px;font-size:17.3px;line-height:17.3px;color:#222;">Card</div><svg class="a" style="left:1619.5px;top:708px;color:#888" width="26" height="22" viewBox="0 0 26 22" fill="none" stroke="currentColor"><rect x="1" y="1" width="24" height="20" rx="1" stroke-width="1.8"/><path d="M1 6.5 H25" stroke-width="1.8"/><path d="M16 15.5 H20" stroke-width="2"/></svg><div class="t" style="left:1572.5px;top:741.64px;font-size:17.2px;line-height:17.2px;color:#888;width:120px;text-align:center;">KPI</div><svg class="a" style="left:1727px;top:710px;color:#888" width="22" height="18" viewBox="0 0 22 18" fill="none" stroke="currentColor"><path d="M1 16.5 L8 9.5 L11 12.5 L20 3.5" stroke-width="1.9"/><path d="M15.5 2.5 L21 2 L20.5 7.5 Z" fill="currentColor" stroke-width="1"/></svg><div class="t" style="left:1678px;top:741.64px;font-size:17.2px;line-height:17.2px;color:#888;width:120px;text-align:center;">Trend</div><div class="a" style="left:1576px;top:778px;width:324px;height:37px;background:#f8f8f8;border:1px solid #ddd;border-radius:3px 3px 0 0"></div><div class="a" style="left:1576px;top:815px;width:324px;height:84px;background:#fff;border:1px solid #ddd;border-top:none;border-radius:0 0 3px 3px;box-shadow:0 1px 1px rgba(0,0,0,.06)"></div><svg class="a" style="left:1583.5px;top:792px;color:#333" width="13" height="8" viewBox="0 0 13 8" fill="none" stroke="currentColor"><path d="M0.5 0.5 L6.5 7.3 L12.5 0.5" stroke-width="1.4"/></svg><div class="t" style="left:1613.7px;top:787.76px;font-size:17.3px;line-height:17.3px;color:#222;">VF</div><svg class="a" style="left:1620.5px;top:830px;color:#222" width="28" height="19" viewBox="0 0 28 19" fill="none" stroke="currentColor"><rect x="0.5" y="0.5" width="27" height="18" rx="1" stroke-width="1" stroke="#666"/><text x="14" y="12" font-size="6.3" font-weight="700" text-anchor="middle" fill="currentColor" stroke="none" font-family="Liberation Sans">&lt; VF &gt;</text></svg><div class="t" style="left:1572.5px;top:862.64px;font-size:17.2px;line-height:17.2px;color:#222;width:120px;text-align:center;">Vf</div><svg class="a" style="left:1888px;top:879px;color:#222" width="16" height="16" viewBox="0 0 16 16" fill="none" stroke="currentColor"><path d="M9.6 0.4 L14.9 5.7 L11.4 9 L10 13.9 L1.1 5.3 L6.6 3.6 Z" fill="currentColor" stroke="none"/><path d="M5.4 9.6 L0.6 14.7" stroke-width="1.7"/></svg></div></body></html>
